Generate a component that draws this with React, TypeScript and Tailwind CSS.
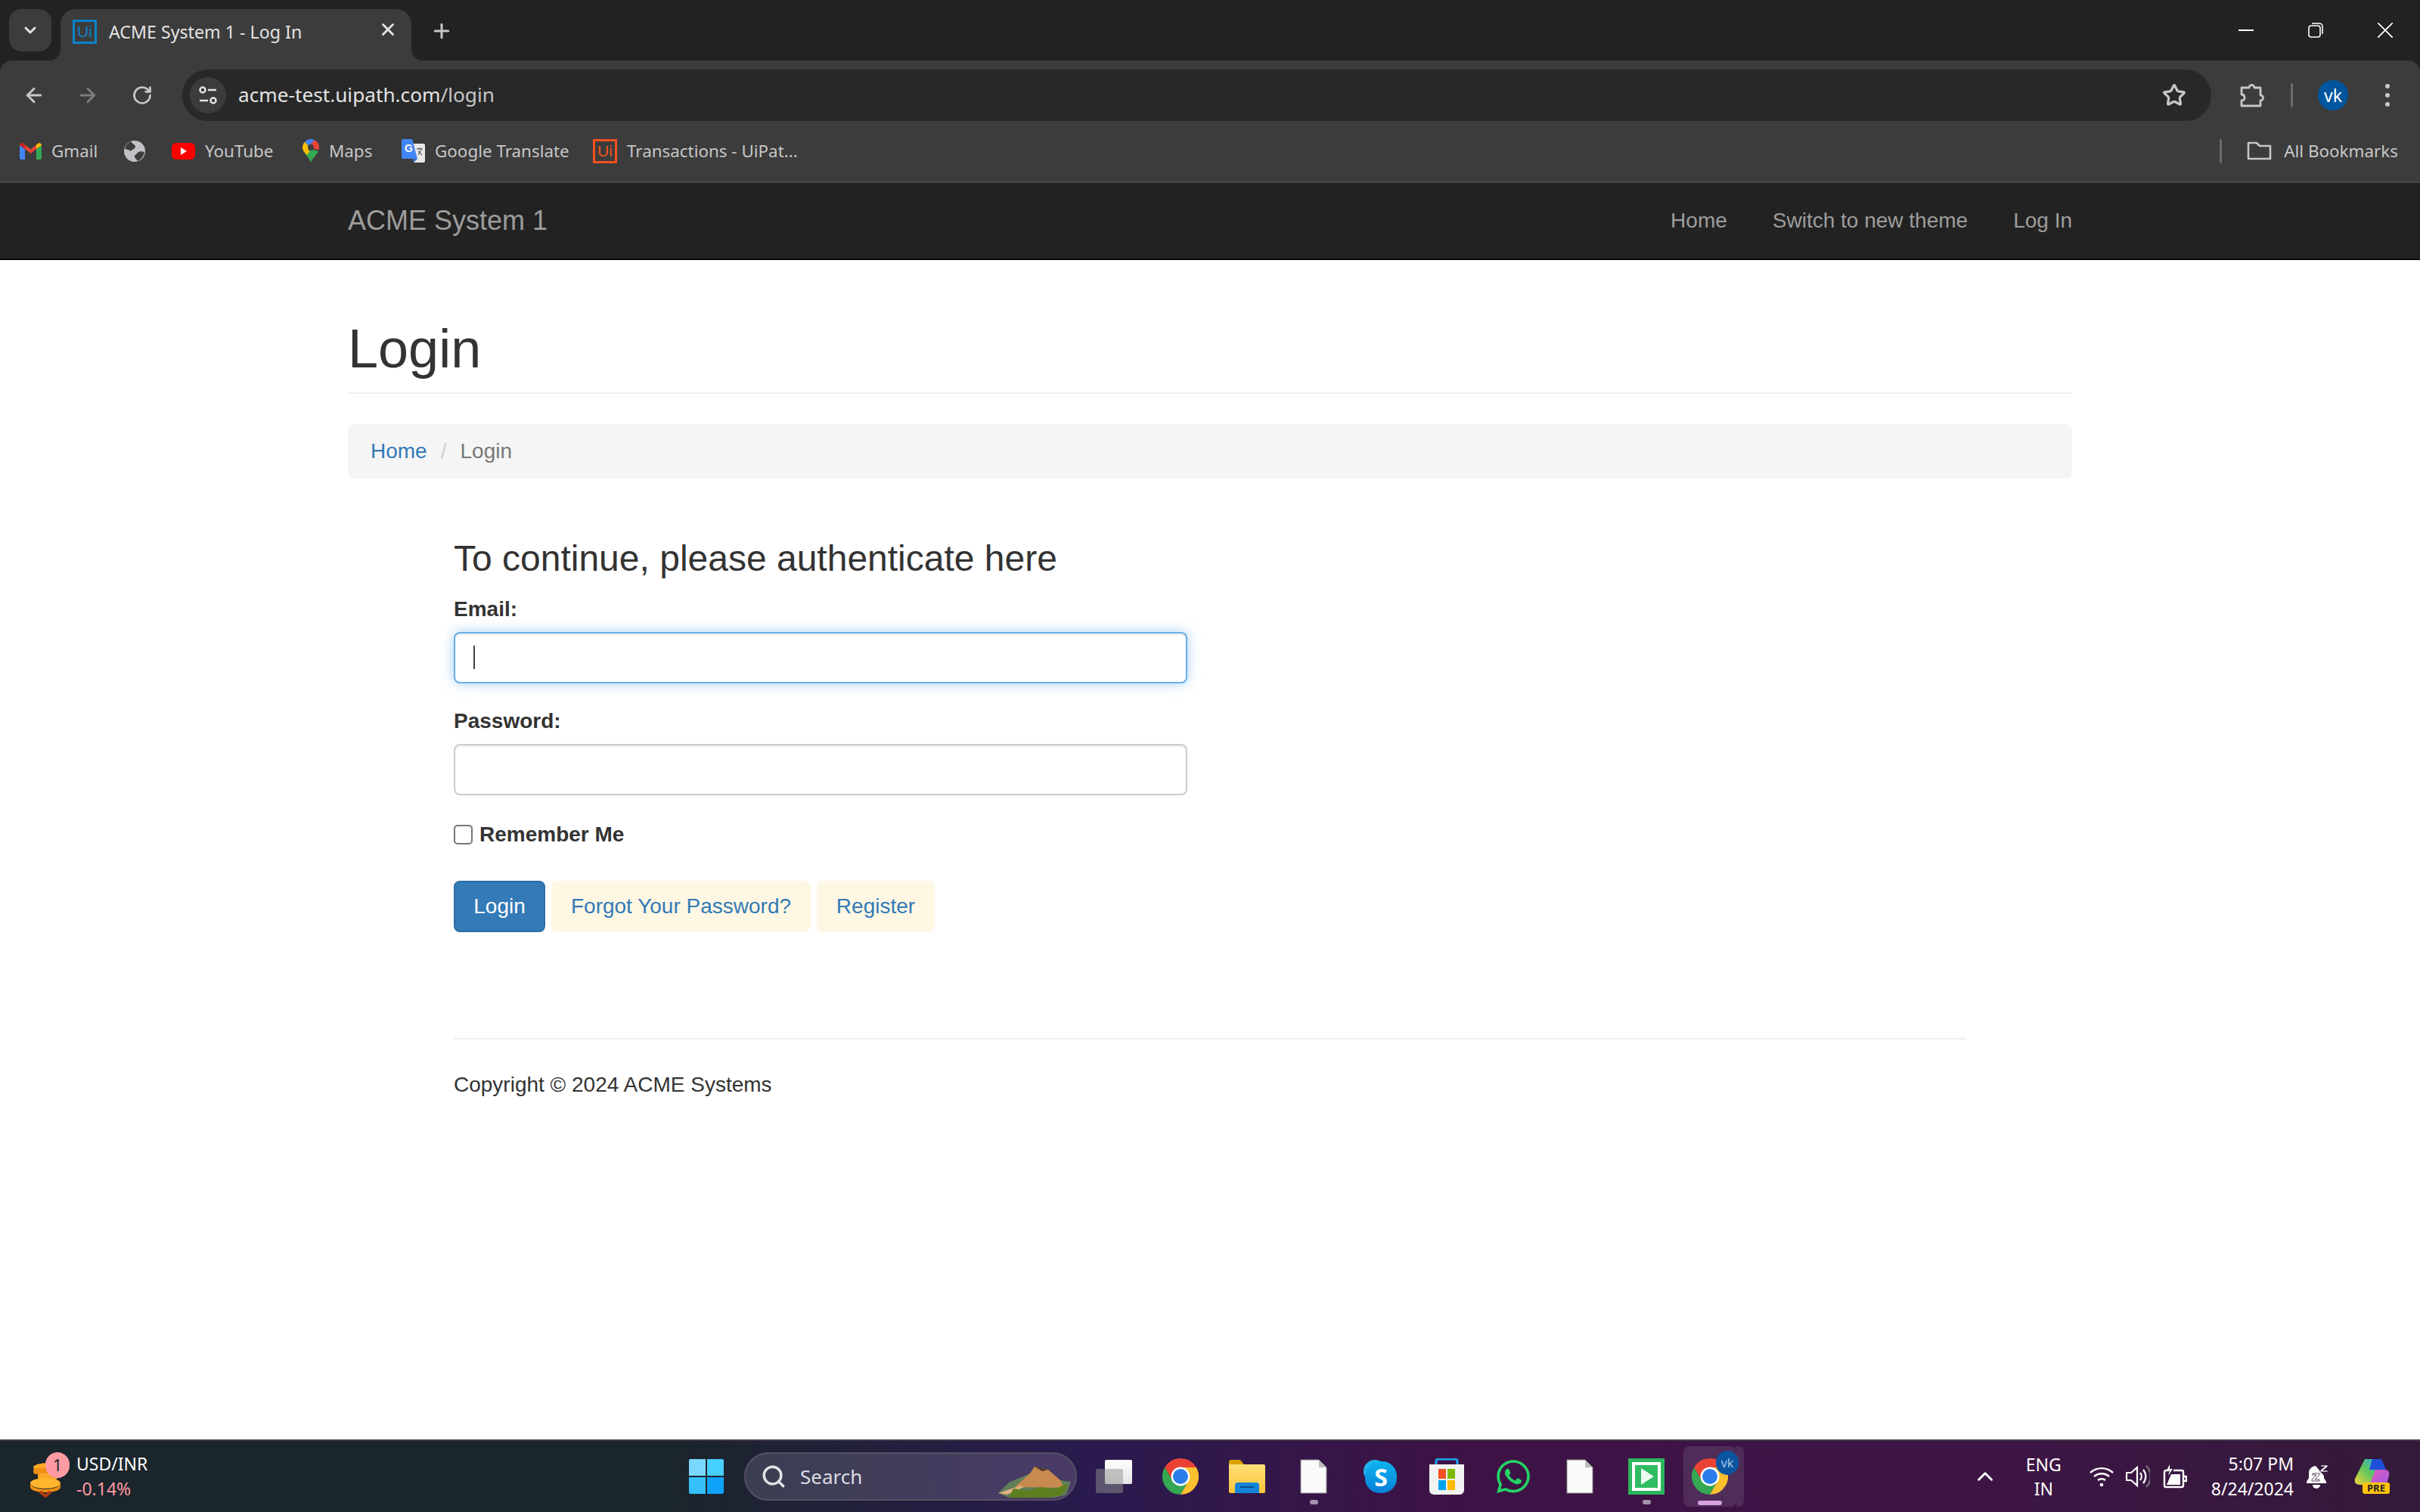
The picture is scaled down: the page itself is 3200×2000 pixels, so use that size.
import type { ReactNode } from "react";
import { ArrowLeft, ArrowRight, ChevronDown, ChevronUp, Plus, RotateCw, Search, Star, X } from "lucide-react";
import { FaWhatsapp } from "react-icons/fa";

const ChromeLogo = ({ size = 48 }: { size?: number }) => (
  <svg width={size} height={size} viewBox="0 0 48 48">
    <path d="M24 12H44.8A24 24 0 0 0 3.2 12L13.6 30A12 12 0 0 1 24 12Z" fill="#ea4335" />
    <path d="M3.2 12A24 24 0 0 0 24 48L34.4 30A12 12 0 0 1 13.6 30Z" fill="#34a853" />
    <path d="M24 48A24 24 0 0 0 44.8 12H24A12 12 0 0 1 34.4 30Z" fill="#fbc02d" />
    <circle cx="24" cy="24" r="12.500" fill="#fff" />
    <circle cx="24" cy="24" r="10" fill="#2b7de9" />
  </svg>
);

const UiLogo = ({ color, size = 32 }: { color: string; size?: number }) => (
  <span
    className="flex items-center justify-center border-[3px] font-['Liberation_Sans',sans-serif] leading-none"
    style={{ borderColor: color, color, width: size, height: size, fontSize: size * 0.66 }}
  >
    Ui
  </span>
);

const GmailIcon = () => (
  <svg width="29" height="22" viewBox="0 0 29 22">
    <path d="M0 3v17a2 2 0 0 0 2 2h5V8z" fill="#4285f4" />
    <path d="M29 3v17a2 2 0 0 1-2 2h-5V8z" fill="#34a853" />
    <path d="M0 3a3 3 0 0 1 5-2l9.500 7.500L24 1a3 3 0 0 1 5 2l-7 5-7.500 6L7 8z" fill="#ea4335" />
    <path d="M0 3a3 3 0 0 1 5-2l2 1.600V8z" fill="#c5221f" />
    <path d="M22 2.500L24 1a3 3 0 0 1 5 2l-7 5z" fill="#fbbc04" />
  </svg>
);

const GlobeIcon = () => (
  <svg width="28" height="28" viewBox="0 0 28 28">
    <circle cx="14" cy="14" r="14" fill="#bfc1c4" />
    <path d="M9 1C5 3 2 6 1 11c4 1 6 1 8 3 2-3 6-3 6-6 0-3-4-3-6-7zM27 15c-4-1-7-1-9 1-2 3-5 3-4 6 1 2 3 3 4 5 5-2 8-7 9-12z" fill="#3c3c3c" />
  </svg>
);

const YouTubeIcon = () => (
  <svg width="31" height="22" viewBox="0 0 31 22">
    <rect width="31" height="22" rx="6" fill="#f00" />
    <path d="M12 6l8 5-8 5z" fill="#fff" />
  </svg>
);

const MapsIcon = () => (
  <svg width="22" height="31" viewBox="0 0 22 31">
    <path d="M11 31C9 25 3 20 1.500 16L14 14l7 2c-2 5-8 9-10 15z" fill="#34a853" />
    <path d="M1.500 16C.5 14 0 13 0 11a11 11 0 0 1 3-7.500L8 9l1 8-3 4z" fill="#fbbc04" />
    <path d="M3 3.500A11 11 0 0 1 11 0c2 0 4 .6 5.500 1.500L8 9z" fill="#4285f4" />
    <path d="M16.500 1.500A11 11 0 0 1 22 11c0 1-.2 2-.5 3L14 13l-6-4z" fill="#ea4335" />
    <circle cx="11" cy="11" r="4" fill="#3c3c3c" />
  </svg>
);

const TranslateIcon = () => (
  <svg width="31" height="31" viewBox="0 0 31 31">
    <path d="M14 6h15a2 2 0 0 1 2 2v21a2 2 0 0 1-2 2H16z" fill="#e8e8e8" />
    <path d="M2 0h12l7 26H2a2 2 0 0 1-2-2V2a2 2 0 0 1 2-2z" fill="#4285f4" />
    <path d="M15 26l1 5 5-5z" fill="#3567c4" />
    <text x="4" y="17" fontSize="14" fontWeight="700" fill="#fff" fontFamily="Liberation Sans, sans-serif">G</text>
    <path d="M20 13h8M24 11v2M22 21l4-7M22 16l5 5" stroke="#666" strokeWidth="1.300" fill="none" />
  </svg>
);

const TuneIcon = () => (
  <svg width="24" height="26" viewBox="0 0 24 26" fill="none" stroke="#e3e3e3" strokeWidth="2.500">
    <circle cx="5" cy="6" r="3.500" />
    <path d="M12 6h11M1 20h11" />
    <circle cx="19" cy="20" r="3.500" />
  </svg>
);

const PuzzleIcon = () => (
  <svg width="34" height="34" viewBox="0 0 34 34" fill="none" stroke="#c7c7c7" strokeWidth="2.800" strokeLinejoin="round">
    <path d="M3 7h10a3.500 3.500 0 0 1 7 0h8v10a3.500 3.500 0 0 1 0 7v7H3v-7c3 0 4-1.500 4-4s-1-4-4-4z" />
  </svg>
);

const FolderIcon = () => (
  <svg width="33" height="25" viewBox="0 0 33 25" fill="none" stroke="#c7c7c7" strokeWidth="2.600" strokeLinejoin="round">
    <path d="M2 2h11l4 4h14v17H2z" />
  </svg>
);

const WinControl = ({ children }: { children: ReactNode }) => (
  <div className="flex h-[80px] w-[92px] items-center justify-center">{children}</div>
);

const Bookmark = ({ icon, label, width }: { icon: ReactNode; label?: string; width: string }) => (
  <div className={`flex shrink-0 items-center gap-[13px] ${width}`}>
    {icon}
    {label && <span className="whitespace-nowrap text-[22.400px] text-[#c7c7c7]">{label}</span>}
  </div>
);

const FileIcon = () => (
  <svg width="36" height="46" viewBox="0 0 36 46">
    <path d="M1 1h24l10 10v34H1z" fill="#fafafa" stroke="#8a8a8a" strokeWidth="1" />
    <path d="M25 1l10 10H25z" fill="#bdbdbd" />
  </svg>
);

const TaskSlot = ({ children, dot }: { children: ReactNode; dot?: boolean }) => (
  <div className="relative flex h-full w-[88px] shrink-0 items-center justify-center">
    {children}
    {dot && <span className="absolute bottom-[10px] h-[6px] w-[11px] rounded-full bg-[#a692ac]" />}
  </div>
);

const Taskbar = () => (
  <footer className="flex h-[96px] shrink-0 items-center border-t-2 border-[#443a4a] bg-[linear-gradient(90deg,#1b252c_0%,#1b252c_28%,#2a1a4e_45%,#3d1345_60%,#3d1545_82%,#331a3a_100%)] font-['Noto_Sans',sans-serif] text-white">
    {/* widget */}
    <div className="flex h-full w-[890px] shrink-0 items-center pl-[40px]">
      <div className="relative h-[60px] w-[61px]">
        <svg className="mt-[12px]" width="44" height="46" viewBox="0 0 44 46">
          <ellipse cx="24" cy="6" rx="20" ry="6" fill="#f9a825" />
          <rect x="4" y="7" width="40" height="8" rx="4" fill="#ef8f12" />
          <rect x="10" y="14" width="26" height="8" rx="3" fill="#f9a825" />
          <ellipse cx="20" cy="27" rx="20" ry="7" fill="#ffb52e" />
          <path d="M0 27c0 4 8 8 20 8s20-4 20-8v5c0 4-8 7-20 7S0 36 0 32z" fill="#ef8f12" />
          <path d="M13 38l7 6 7-6" stroke="#b33c12" strokeWidth="4" fill="none" />
        </svg>
        <span className="absolute left-[20px] top-[-2px] flex h-[34px] w-[32px] items-center justify-center rounded-full bg-[#ff9aa2] text-[21px] leading-none text-[#1b252c]">
          1
        </span>
      </div>
      <div className="flex flex-col text-[23px] leading-[33px]">
        <span>USD/INR</span>
        <span className="text-[#ff9aa2]">-0.14%</span>
      </div>
    </div>

    {/* start + search + pinned */}
    <TaskSlot>
      <div className="grid h-[46px] w-[46px] grid-cols-2 gap-[2px]">
        <span className="rounded-tl-[2px] bg-[#7ad7ff]" />
        <span className="rounded-tr-[2px] bg-[#46d0ff]" />
        <span className="rounded-bl-[2px] bg-[#35c0fb]" />
        <span className="rounded-br-[2px] bg-[#0fa2fb]" />
      </div>
    </TaskSlot>
    <div className="relative ml-[6px] mr-[5px] flex h-[64px] w-[440px] shrink-0 items-center overflow-hidden rounded-full border-2 border-[#565062] bg-[linear-gradient(90deg,#3a3f50,#4a3a68)] pl-[20px]">
      <Search size={34} strokeWidth={2.4} className="text-[#e4e4e8]" />
      <span className="ml-[18px] text-[26px] text-[#dcdce4]">Search</span>
      <svg className="absolute right-[4px] top-[16px]" width="98" height="42" viewBox="0 0 98 42">
        <path d="M0 36l14-14 28-12L48 1l18 4 16 14 14 2-6 17-16 4H14z" fill="#5f7f58" />
        <path d="M22 28l20-18 6-9 18 4 16 14 6 10z" fill="#c98a4f" />
        <path d="M48 1l18 4-8 2z" fill="#4a3424" />
        <path d="M0 36l30-10 4 2-22 10z" fill="#e0b080" />
        <path d="M14 42l6-12 20 3 14-5 22 2 14-6 2 6-10 9-16 3z" fill="#5d7f1f" />
      </svg>
    </div>
    <TaskSlot>
      <div className="relative h-[44px] w-[48px]">
        <span className="absolute right-0 top-0 h-[32px] w-[36px] rounded-[2px] bg-[linear-gradient(180deg,#fff,#e4e4e4)]" />
        <span className="absolute bottom-0 left-0 h-[32px] w-[36px] rounded-[2px] bg-[#909090]/50" />
      </div>
    </TaskSlot>
    <TaskSlot>
      <ChromeLogo />
    </TaskSlot>
    <TaskSlot>
      <svg width="48" height="44" viewBox="0 0 48 44">
        <defs>
          <linearGradient id="fld" x1="0" y1="0" x2="0" y2="1">
            <stop offset="0" stopColor="#ffe07a" />
            <stop offset="1" stopColor="#fcc53a" />
          </linearGradient>
        </defs>
        <path d="M0 3a3 3 0 0 1 3-3h12l5 6H0z" fill="#dba000" />
        <path d="M0 6h46a2 2 0 0 1 2 2v34a2 2 0 0 1-2 2H2a2 2 0 0 1-2-2z" fill="url(#fld)" />
        <path d="M8 44V34a4 4 0 0 1 4-4h24a4 4 0 0 1 4 4v10z" fill="#1484d8" />
        <rect x="15" y="35" width="18" height="2" fill="#0b4f8c" />
      </svg>
    </TaskSlot>
    <TaskSlot dot>
      <FileIcon />
    </TaskSlot>
    <TaskSlot>
      <div className="relative h-[44px] w-[44px]">
        <span className="absolute left-0 top-0 h-[30px] w-[30px] rounded-full bg-[#21b5ea]" />
        <div className="absolute bottom-0 right-0 flex h-[42px] w-[42px] items-center justify-center rounded-[46%] bg-[linear-gradient(180deg,#0cb4f0,#0a7fd8)] text-[32px] font-bold leading-none text-white">
          S
        </div>
      </div>
    </TaskSlot>
    <TaskSlot>
      <svg width="46" height="48" viewBox="0 0 46 48">
        <path d="M9 10V4a3 3 0 0 1 3-3h22a3 3 0 0 1 3 3v6" fill="none" stroke="#1fa4ee" strokeWidth="3" />
        <path d="M0 8h46v34a6 6 0 0 1-6 6H6a6 6 0 0 1-6-6z" fill="#f2f2f2" />
        <rect x="12" y="14" width="10" height="13" fill="#f25022" />
        <rect x="24" y="14" width="10" height="13" fill="#7fba00" />
        <rect x="12" y="29" width="10" height="13" fill="#00a4ef" />
        <rect x="24" y="29" width="10" height="13" fill="#ffb900" />
      </svg>
    </TaskSlot>
    <TaskSlot>
      <FaWhatsapp size={50} color="#25d366" />
    </TaskSlot>
    <TaskSlot>
      <FileIcon />
    </TaskSlot>
    <TaskSlot dot>
      <svg width="48" height="48" viewBox="0 0 48 48">
        <rect width="48" height="48" fill="#2bb55c" />
        <rect x="5" y="5" width="38" height="38" fill="#fff" />
        <rect x="9" y="9" width="30" height="30" fill="#2fbc62" />
        <path d="M17 13l17 11-17 11z" fill="#eafaf0" />
      </svg>
    </TaskSlot>
    <div className="relative ml-[5px] flex h-[80px] w-[70px] shrink-0 items-center justify-center rounded-[8px] bg-white/10">
      <span className="absolute right-[-10px] top-0 h-[80px] w-[10px] rounded-r-[8px] bg-white/10" />
      <ChromeLogo />
      <span className="absolute right-[-3px] top-[6px] flex h-[32px] w-[30px] items-center justify-center rounded-full bg-[#0b55a0] text-[16px] text-[#a9c6e6]">
        vk
      </span>
      <span className="absolute bottom-[2px] h-[6px] w-[32px] rounded-full bg-[#d8a0e0]" />
    </div>

    {/* tray */}
    <div className="ml-auto flex h-full items-center pr-[40px]">
      <ChevronUp size={34} strokeWidth={2} className="mr-[37px]" />
      <div className="mr-[37px] flex flex-col items-center text-[23px] leading-[32px]">
        <span>ENG</span>
        <span>IN</span>
      </div>
      <svg className="mr-[16px]" width="32" height="28" viewBox="0 0 32 28" fill="none" stroke="#fff" strokeWidth="2.400">
        <path d="M1 9a22 22 0 0 1 30 0M6 14a15 15 0 0 1 20 0M11 19a8 8 0 0 1 10 0" />
        <circle cx="16" cy="25" r="2.300" fill="#fff" stroke="none" />
      </svg>
      <svg className="mr-[17px]" width="32" height="34" viewBox="0 0 32 34" fill="none" stroke="#fff" strokeWidth="2.200">
        <path d="M1 12h6l8-7v24l-8-7H1zM19 12a8 8 0 0 1 0 10M23 8a14 14 0 0 1 0 18" />
        <path d="M27 3a20 20 0 0 1 0 28" stroke="#777" />
      </svg>
      <svg className="mr-[32px]" width="32" height="32" viewBox="0 0 32 32" fill="none" stroke="#fff" strokeWidth="2.400">
        <path d="M8 8H4a2 2 0 0 0-2 2v18a2 2 0 0 0 2 2h21a2 2 0 0 0 2-2V10a2 2 0 0 0-2-2H14" />
        <path d="M28 16h3v6h-3" />
        <path d="M5 27l6-14h12v14z" fill="#fff" stroke="none" />
        <path d="M9 0L5 8h4l-2 7 6-9H9z" fill="#fff" stroke="none" />
      </svg>
      <div className="mr-[17px] flex flex-col items-end text-[23px] leading-[33px]">
        <span>5:07 PM</span>
        <span>8/24/2024</span>
      </div>
      <svg className="mr-[33px]" width="30" height="32" viewBox="0 0 30 32">
        <path d="M12 2a9 9 0 0 0-9 9v7l-3 5v2h26v-2l-3-5v-3" fill="#fff" />
        <path d="M8 27a5 5 0 0 0 10 0z" fill="#fff" />
        <path d="M19 1h9v2l-6 5h6v2H18V8l6-5h-5zM8 12h9v2l-6 6h6v2H7v-2l6-6H8z" fill="#fff" stroke="#3a1a40" strokeWidth=".8" />
      </svg>
      <div className="relative h-[46px] w-[47px]">
        <svg width="47" height="46" viewBox="0 0 47 46">
          <defs>
            <linearGradient id="cpa" x1="0" y1="1" x2="1" y2="0">
              <stop offset="0" stopColor="#f8d33a" />
              <stop offset=".5" stopColor="#62c65a" />
              <stop offset="1" stopColor="#24a8e8" />
            </linearGradient>
            <linearGradient id="cpb" x1="0" y1="0" x2="1" y2="1">
              <stop offset="0" stopColor="#e35bb0" />
              <stop offset="1" stopColor="#9a5cf0" />
            </linearGradient>
          </defs>
          <path d="M14 0h20l-10 34H8c-6 0-8-3-7-8z" fill="url(#cpa)" />
          <path d="M24 0h12l6 14H20z" fill="#1d4fd8" />
          <path d="M28 14h12c5 0 7 3 6 8l-5 18H18z" fill="url(#cpb)" />
        </svg>
        <span className="absolute bottom-0 right-0 flex h-[15px] w-[36px] items-center justify-center rounded-[3px] bg-[#ffc40d] text-[13px] font-bold leading-none text-[#222]">
          PRE
        </span>
      </div>
    </div>
  </footer>
);

const BrowserChrome = () => (
  <header className="shrink-0 bg-[#212322] font-['Noto_Sans',sans-serif]">
    {/* tab strip */}
    <div className="flex h-[80px] items-end pl-[12px]">
      <div className="mb-[12px] flex h-[56px] w-[56px] items-center justify-center rounded-[16px] bg-[#3c3c3c]">
        <ChevronDown size={24} strokeWidth={3} className="text-[#e3e3e3]" />
      </div>
      <div className="relative ml-[12px] flex h-[68px] w-[464px] items-center rounded-t-[20px] bg-[#3c3c3c] pb-[8px] pl-[16px]">
        <span className="absolute bottom-0 left-[-16px] h-[16px] w-[16px] bg-[radial-gradient(circle_at_0_0,#212322_16px,#3c3c3c_16.5px)]" />
        <span className="absolute bottom-0 right-[-16px] h-[16px] w-[16px] bg-[radial-gradient(circle_at_100%_0,#212322_16px,#3c3c3c_16.5px)]" />
        <UiLogo color="#0a84cc" />
        <span className="ml-[16px] whitespace-nowrap text-[23.200px] text-[#e3e3e3]">ACME System 1 - Log In</span>
        <X size={26} strokeWidth={2.6} className="absolute right-[18px] top-[14px] text-[#e3e3e3]" />
      </div>
      <Plus size={30} strokeWidth={2.4} className="mb-[24px] ml-[25px] text-[#c7c7c7]" />
      <div className="ml-auto flex text-white">
        <WinControl>
          <span className="h-[2px] w-[20px] bg-white" />
        </WinControl>
        <WinControl>
          <svg width="20" height="20" viewBox="0 0 20 20" fill="none" stroke="#fff" strokeWidth="1.600">
            <rect x="1" y="4" width="15" height="15" rx="3" />
            <path d="M5 1h10a4 4 0 0 1 4 4v10" />
          </svg>
        </WinControl>
        <WinControl>
          <svg width="20" height="20" viewBox="0 0 20 20" stroke="#fff" strokeWidth="1.700">
            <path d="M0 0l20 20M20 0L0 20" />
          </svg>
        </WinControl>
      </div>
    </div>

    {/* toolbar */}
    <div className="rounded-t-[16px] border-b-2 border-[#4a4a4a] bg-[#3c3c3c]">
      <div className="flex h-[80px] items-end pl-[30px]">
        <div className="flex h-[68px] items-center">
          <ArrowLeft size={30} strokeWidth={2.3} className="text-[#c7c7c7]" />
          <ArrowRight size={30} strokeWidth={2.3} className="ml-[41px] text-[#7c7c7c]" />
          <RotateCw size={28} strokeWidth={2.3} className="ml-[43px] text-[#c7c7c7]" />
        </div>
        <div className="ml-[39px] flex h-[68px] w-[2683px] shrink-0 items-center rounded-full bg-[#282828] pl-[10px] pr-[33px]">
          <div className="flex h-[48px] w-[48px] items-center justify-center rounded-full bg-[#3c3c3c]">
            <TuneIcon />
          </div>
          <span className="ml-[16px] text-[26.200px] text-[#c7c7c7]">
            <span className="text-[#e3e3e3]">acme-test.uipath.com</span>/login
          </span>
          <Star size={32} strokeWidth={2.4} className="ml-auto text-[#c7c7c7]" />
        </div>
        <div className="flex h-[68px] flex-1 items-center">
          <div className="ml-[37px]">
            <PuzzleIcon />
          </div>
          <span className="ml-[34px] h-[32px] w-[3px] rounded-full bg-[#6a6a6a]" />
          <span className="ml-[33px] flex h-[40px] w-[40px] items-center justify-center rounded-full bg-[#00569e] text-[23px] text-white">
            vk
          </span>
          <div className="ml-[49px] flex flex-col gap-[6px]">
            <span className="h-[6px] w-[6px] rounded-full bg-[#c7c7c7]" />
            <span className="h-[6px] w-[6px] rounded-full bg-[#c7c7c7]" />
            <span className="h-[6px] w-[6px] rounded-full bg-[#c7c7c7]" />
          </div>
        </div>
      </div>

      {/* bookmarks */}
      <div className="flex h-[80px] items-center pl-[26px]">
        <Bookmark icon={<GmailIcon />} label="Gmail" width="w-[138px]" />
        <Bookmark icon={<GlobeIcon />} width="w-[63px]" />
        <Bookmark icon={<YouTubeIcon />} label="YouTube" width="w-[173px]" />
        <Bookmark icon={<MapsIcon />} label="Maps" width="w-[131px]" />
        <Bookmark icon={<TranslateIcon />} label="Google Translate" width="w-[253px]" />
        <Bookmark icon={<UiLogo color="#f4511e" />} label="Transactions - UiPat..." width="w-[300px]" />
        <span className="ml-auto h-[32px] w-[3px] rounded-full bg-[#6a6a6a]" />
        <div className="ml-[33px] flex items-center gap-[16px] pr-[29px]">
          <FolderIcon />
          <span className="text-[22.400px] text-[#c7c7c7]">All Bookmarks</span>
        </div>
      </div>
    </div>
  </header>
);

const LoginPage = () => (
  <div className="min-h-0 flex-1 bg-white font-['Liberation_Sans',sans-serif] text-[28px] leading-[40px] text-[#333]">
    <nav className="h-[102px] border-b-2 border-[#080808] bg-[#222]">
      <div className="mx-auto flex h-[100px] w-[2280px] items-center">
        <span className="text-[36px] text-[#9d9d9d]">ACME System 1</span>
        <div className="ml-auto flex gap-[60px] text-[#9d9d9d]">
          <span>Home</span>
          <span>Switch to new theme</span>
          <span>Log In</span>
        </div>
      </div>
    </nav>

    <main className="mx-auto w-[2280px]">
      <h1 className="mt-[78px] border-b-2 border-[#eee] pb-[18px] text-[72px] leading-[79px]">Login</h1>
      <div className="mt-[40px] flex h-[72px] items-center rounded-[8px] bg-[#f5f5f5] px-[30px]">
        <span className="text-[#337ab7]">Home</span>
        <span className="px-[18px] text-[#ccc]">/</span>
        <span className="text-[#777]">Login</span>
      </div>

      <div className="px-[140px]">
        <h3 className="mt-[79px] text-[48px] leading-[53px]">To continue, please authenticate here</h3>
        <form className="mt-[21px] w-[970px]">
          <label className="block font-bold">Email:</label>
          <div className="relative mt-[10px]">
            <input className="block h-[68px] w-full rounded-[8px] border-2 border-[#66afe9] bg-white shadow-[inset_0_2px_2px_rgba(0,0,0,0.075),0_0_16px_rgba(102,175,233,0.6)] outline-none" />
            <span className="absolute left-[26px] top-[18px] h-[31px] w-[2px] bg-[#444]" />
          </div>
          <label className="mt-[30px] block font-bold">Password:</label>
          <input className="mt-[10px] block h-[68px] w-full rounded-[8px] border-2 border-[#ccc] bg-white shadow-[inset_0_2px_2px_rgba(0,0,0,0.075)] outline-none" />
          <label className="mt-[31px] flex h-[42px] items-center font-bold">
            <span className="h-[26px] w-[25px] rounded-[5px] border-2 border-[#767676] bg-white" />
            <span className="ml-[9px]">Remember Me</span>
          </label>
          <div className="mt-[40px] flex gap-[8px]">
            <button type="button" className="h-[68px] w-[121px] rounded-[8px] border-2 border-[#2e6da4] bg-[#337ab7] text-white">
              Login
            </button>
            <button type="button" className="h-[68px] w-[343px] rounded-[8px] bg-[#fdf7e4] text-[#337ab7]">
              Forgot Your Password?
            </button>
            <button type="button" className="h-[68px] w-[156px] rounded-[8px] bg-[#fdf7e4] text-[#337ab7]">
              Register
            </button>
          </div>
        </form>
        <hr className="mt-[140px] border-t-2 border-[#eee]" />
        <p className="mt-[40px]">Copyright © 2024 ACME Systems</p>
      </div>
    </main>
  </div>
);

const App = () => (
  <div className="flex h-[2000px] w-[3200px] flex-col overflow-hidden">
    <BrowserChrome />
    <LoginPage />
    <Taskbar />
  </div>
);

export default App;
